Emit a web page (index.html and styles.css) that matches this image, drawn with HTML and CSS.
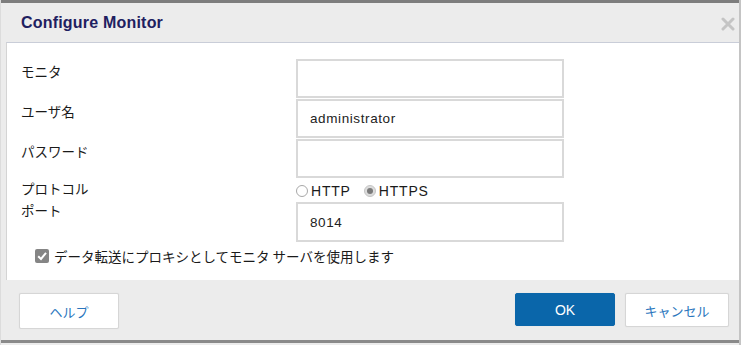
FILE: index.html
```html
<!DOCTYPE html>
<html lang="ja">
<head>
  <meta charset="UTF-8" />
  <title>Configure Monitor</title>
  <link rel="stylesheet" href="styles.css">
</head>
<body>

  <div class="dialog">
    <div class="top-line"></div>

    <div class="titlebar">
      <span class="title">Configure Monitor</span>
      <svg class="close" width="14" height="14" viewBox="0 0 14 14">
        <path d="M2 2 L12 12 M12 2 L2 12" stroke="#c4c4c4" stroke-width="3" stroke-linecap="round"/>
      </svg>
    </div>

    <div class="panel">
      <div class="form">
        <label class="label">モニタ</label>
        <div class="field"><input class="input" type="text" value=""></div>

        <label class="label">ユーザ名</label>
        <div class="field"><input class="input" type="text" value="administrator"></div>

        <label class="label">パスワード</label>
        <div class="field"><input class="input" type="password" value=""></div>

        <label class="label label-proto">プロトコル</label>
        <div class="radios">
          <span class="radio"></span><span class="radio-text">HTTP</span>
          <span class="radio checked"></span><span class="radio-text">HTTPS</span>
        </div>

        <label class="label label-port">ポート</label>
        <div class="field"><input class="input" type="text" value="8014"></div>
      </div>

      <div class="check-row">
        <span class="checkbox">
          <svg width="14" height="14" viewBox="0 0 14 14">
            <path d="M3.2 7.2 L6 10 L11 3.8" fill="none" stroke="#fff" stroke-width="2"/>
          </svg>
        </span>
        <span class="check-text">データ転送にプロキシとしてモニタ サーバを使用します</span>
      </div>
    </div>

    <div class="footer">
      <button class="btn">ヘルプ</button>
      <div class="right-btns">
        <button class="btn btn-primary">OK</button>
        <button class="btn btn-cancel">キャンセル</button>
      </div>
    </div>

    <div class="bottom-line"></div>
  </div>

</body>
</html>
```

FILE: styles.css
```css
* {
  box-sizing: border-box;
  margin: 0;
  padding: 0;
}

body {
  font-family: 'Liberation Sans', 'Noto Sans CJK JP', sans-serif;
  background: #fff;
  color: #222;
  width: 741px;
  height: 345px;
  overflow: hidden;
}

.dialog {
  width: 741px;
  height: 345px;
  background: #ececec;
  border-left: 1px solid #dcdcdc;
  border-right: 2px solid #c4c4c4;
  display: flex;
  flex-direction: column;
}

.top-line {
  height: 3px;
  background: #7d7d7d;
}

.titlebar {
  height: 39px;
  padding: 0 4px 0 20px;
  display: flex;
  align-items: center;
  justify-content: space-between;
}

.title {
  font-size: 16px;
  font-weight: bold;
  color: #1e2060;
  letter-spacing: 0.2px;
}

.close {
  margin-top: 2px;
}

.panel {
  margin-left: 5px;
  height: 238px;
  background: #fff;
  border-top: 1px solid #c9cdd8;
  border-left: 1px solid #d4d4d4;
  padding: 16px 0 0 14px;
}

.form {
  display: grid;
  grid-template-columns: 275px 268px;
  grid-template-rows: 39px 39px 39px 22px 40px;
  row-gap: 1px;
}

.label {
  font-family: 'Noto Sans CJK JP', sans-serif;
  font-size: 13.5px;
  line-height: 16px;
  padding-top: 4px;
  color: #1a1a1a;
}

.label-proto {
  padding-top: 1px;
}

.label-port {
  padding-top: 0;
}

.input {
  width: 268px;
  height: 100%;
  border: 2px solid #d9d9d9;
  padding: 0 12px;
  font-family: 'Liberation Sans', sans-serif;
  font-size: 13.5px;
  letter-spacing: 0.6px;
  color: #222;
  outline: none;
  background: #fff;
}

.field {
  height: 100%;
}

.radios {
  display: flex;
  align-items: center;
  padding-top: 1px;
  font-size: 14px;
  letter-spacing: 0.8px;
}

.radio {
  width: 12px;
  height: 12px;
  border-radius: 50%;
  border: 1px solid #a8a8a8;
  background: #fff;
  margin-right: 3px;
  position: relative;
}

.radio.checked {
  border-color: #c6c6c6;
  background: #dcdcdc;
}

.radio.checked::after {
  content: "";
  position: absolute;
  left: 2px;
  top: 2px;
  width: 6px;
  height: 6px;
  border-radius: 50%;
  background: #7a7a7a;
}

.radio-text {
  margin-right: 13px;
  color: #1a1a1a;
}

.check-row {
  display: flex;
  align-items: center;
  margin-top: 4px;
  padding-left: 14px;
}

.checkbox {
  width: 14px;
  height: 14px;
  background: #858585;
  border-radius: 2px;
  display: flex;
  margin-right: 5px;
}

.check-text {
  font-family: 'Noto Sans CJK JP', sans-serif;
  font-size: 13.5px;
  color: #1a1a1a;
}

.footer {
  flex: 1;
  display: flex;
  justify-content: space-between;
  padding: 13px 10px 0 18px;
}

.right-btns {
  display: flex;
  gap: 10px;
}

.btn {
  height: 36px;
  width: 100px;
  background: #fff;
  border: 1px solid #d6d6d6;
  border-radius: 2px;
  font-family: 'Noto Sans CJK JP', sans-serif;
  font-size: 13px;
  color: #2a76bd;
  box-shadow: 0 0 1px rgba(0,0,0,0.1);
}

.btn-primary {
  background: #0a66aa;
  border-color: #0a66aa;
  color: #fff;
  height: 33px;
  font-family: 'Liberation Sans', sans-serif;
  font-size: 14px;
}

.btn-cancel {
  width: 104px;
  height: 34px;
}

.bottom-line {
  height: 3px;
  background: #8a8a8a;
  margin-bottom: 2px;
}
```
